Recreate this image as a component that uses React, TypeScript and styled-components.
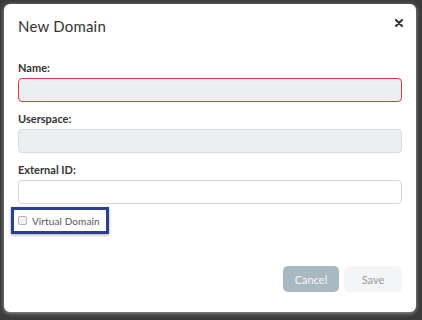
import React from 'react';
import styled, { createGlobalStyle } from 'styled-components';

const GlobalStyle = createGlobalStyle`
  html, body {
    margin: 0;
    padding: 0;
    background: #3b3b3b;
    font-family: 'Lato', 'Open Sans', sans-serif;
  }
  * {
    box-sizing: border-box;
  }
`;

const Page = styled.div`
  width: 422px;
  height: 320px;
  padding: 4px 6px 8px 4px;
  background: #3b3b3b;
`;

const Modal = styled.div`
  width: 412px;
  height: 308px;
  background: #ffffff;
  border-radius: 6px;
  box-shadow: 0 1px 4px rgba(170, 170, 170, 0.9);
  display: flex;
  flex-direction: column;
`;

const Header = styled.div`
  height: 43px;
  display: flex;
  align-items: center;
  justify-content: space-between;
  padding: 0 12px 0 14px;
`;

const Title = styled.h4`
  margin: 0;
  font-size: 15px;
  font-weight: 400;
  color: #333333;
  letter-spacing: 0.2px;
`;

const Close = styled.button`
  border: none;
  background: none;
  padding: 0;
  width: 10px;
  height: 10px;
  display: flex;
  align-items: center;
  justify-content: center;
  margin-top: -6px;
  cursor: pointer;
`;

const Body = styled.div`
  padding: 14px 14px 0;
  display: flex;
  flex-direction: column;
  gap: 10px;
`;

const Field = styled.div`
  display: flex;
  flex-direction: column;
  gap: 3px;
`;

const Label = styled.label`
  font-size: 11px;
  line-height: 14px;
  font-weight: 700;
  color: #333333;
`;

const Input = styled.div<{ $variant: 'error' | 'disabled' | 'plain' }>`
  height: 24px;
  border-radius: 4px;
  border: 1px solid
    ${(p) =>
      p.$variant === 'error' ? '#e8383d' : p.$variant === 'disabled' ? '#d8dbde' : '#d3d5d8'};
  background: ${(p) => (p.$variant === 'plain' ? '#ffffff' : '#eceff1')};
`;

const Highlight = styled.div`
  margin: -7px 0 0 -7px;
  width: 98px;
  height: 27px;
  border: 3px solid #2b3f8c;
  box-shadow: 0 1px 3px rgba(0, 0, 0, 0.35);
  display: flex;
  align-items: center;
  gap: 5px;
  padding-left: 4px;
`;

const CheckBox = styled.span`
  width: 9px;
  height: 9px;
  border: 1px solid #b3b3b3;
  border-radius: 2px;
  background: #f2f2f2;
`;

const CheckLabel = styled.span`
  font-size: 10px;
  color: #555555;
  line-height: 14px;
  letter-spacing: 0.1px;
`;

const Footer = styled.div`
  margin-top: auto;
  padding: 0 14px 20px;
  display: flex;
  justify-content: flex-end;
  gap: 5px;
`;

const Button = styled.button<{ $primary?: boolean }>`
  height: 26px;
  width: ${(p) => (p.$primary ? '56px' : '58px')};
  border: none;
  border-radius: 5px;
  font-family: 'Lato', 'Open Sans', sans-serif;
  font-size: 11px;
  background: ${(p) => (p.$primary ? '#a9b9c1' : '#f3f5f7')};
  color: ${(p) => (p.$primary ? '#f4f7f8' : '#9a9a9a')};
  padding: 0;
`;

export default function App() {
  return (
    <>
      <GlobalStyle />
      <Page>
        <Modal>
          <Header>
            <Title>New Domain</Title>
            <Close aria-label="Close">
              <svg width="8" height="8" viewBox="0 0 8 8">
                <path d="M1 1L7 7M7 1L1 7" stroke="#333" strokeWidth="2" strokeLinecap="round" />
              </svg>
            </Close>
          </Header>
          <Body>
            <Field>
              <Label>Name:</Label>
              <Input $variant="error" />
            </Field>
            <Field>
              <Label>Userspace:</Label>
              <Input $variant="disabled" />
            </Field>
            <Field>
              <Label>External ID:</Label>
              <Input $variant="plain" />
            </Field>
            <Highlight>
              <CheckBox />
              <CheckLabel>Virtual Domain</CheckLabel>
            </Highlight>
          </Body>
          <Footer>
            <Button $primary>Cancel</Button>
            <Button>Save</Button>
          </Footer>
        </Modal>
      </Page>
    </>
  );
}
